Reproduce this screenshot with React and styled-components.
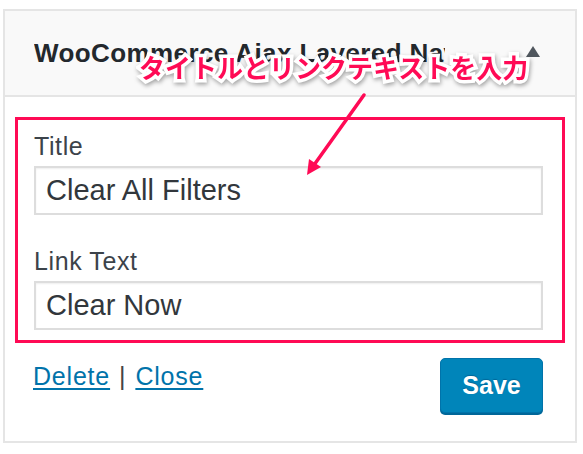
import React from "react";
import styled, { createGlobalStyle } from "styled-components";

const GlobalStyle = createGlobalStyle`
  html, body {
    margin: 0;
    padding: 0;
    background: #fff;
  }
  body {
    font-family: "Liberation Sans", Arial, sans-serif;
  }
`;

const Page = styled.div`
  position: relative;
  width: 583px;
  height: 454px;
  box-sizing: border-box;
  padding: 9px 6px 0 3px;
`;

const Widget = styled.div`
  border: 2px solid #e5e5e5;
  background: #fff;
`;

const WidgetHeader = styled.div`
  height: 84px;
  display: flex;
  align-items: center;
  justify-content: space-between;
  padding: 0 35px 0 29px;
  background: #f9f9f9;
  border-bottom: 2px solid #e5e5e5;
`;

const WidgetTitle = styled.h3`
  margin: 0;
  width: 411px;
  overflow: hidden;
  white-space: nowrap;
  font-size: 26px;
  font-weight: 700;
  letter-spacing: 0.4px;
  color: #23282d;
`;

const Toggle = styled.span`
  width: 0;
  height: 0;
  margin-bottom: 4px;
  border-left: 7px solid transparent;
  border-right: 7px solid transparent;
  border-bottom: 11px solid #50575e;
`;

const WidgetBody = styled.div`
  padding: 20px 10px 0 10px;
`;

const Highlight = styled.div`
  border: 3px solid #ff0a55;
  padding: 12px 19px 10px 16px;
`;

const Field = styled.div`
  & + & {
    margin-top: 32px;
  }
`;

const Label = styled.label`
  display: block;
  font-size: 25px;
  line-height: 28px;
  letter-spacing: 0.6px;
  color: #3c434a;
  margin-bottom: 6px;
`;

const Input = styled.input`
  display: block;
  width: 100%;
  height: 49px;
  box-sizing: border-box;
  border: 2px solid #ddd;
  box-shadow: inset 0 1px 2px rgba(0, 0, 0, 0.07);
  padding: 0 10px;
  font-family: "Liberation Sans", Arial, sans-serif;
  font-size: 29px;
  color: #32373c;
  background: #fff;
  outline: none;
`;

const Actions = styled.div`
  display: flex;
  justify-content: space-between;
  align-items: flex-start;
  padding: 15px 22px 28px 18px;
`;

const Links = styled.div`
  font-size: 25px;
  line-height: 28px;
  letter-spacing: 0.8px;
  color: #444;
  padding-top: 4px;
`;

const Link = styled.a`
  color: #0073aa;
  text-decoration: underline;
  text-underline-offset: 3px;
  cursor: pointer;
`;

const Sep = styled.span`
  margin: 0 9px;
`;

const SaveButton = styled.button`
  width: 103px;
  height: 55px;
  box-sizing: border-box;
  border: 1px solid #0073aa;
  border-radius: 5px;
  background: #0085ba;
  box-shadow: 0 2px 0 #006799;
  color: #fff;
  font-family: "Liberation Sans", Arial, sans-serif;
  font-size: 25px;
  font-weight: 700;
  text-shadow: 0 -1px 1px #006799;
  cursor: pointer;
`;

const Callout = styled.div`
  position: absolute;
  top: 52px;
  left: 139px;
  font-family: "Noto Sans CJK JP", sans-serif;
  font-size: 26px;
  font-weight: 700;
  line-height: 30px;
  color: #ff0a55;
  -webkit-text-stroke: 7px #fff;
  paint-order: stroke fill;
  filter: drop-shadow(1px 2px 2px rgba(0, 0, 0, 0.35));
  white-space: nowrap;
`;

const ArrowLayer = styled.svg`
  position: absolute;
  top: 0;
  left: 0;
  pointer-events: none;
`;

export default function App() {
  return (
    <>
      <GlobalStyle />
      <Page>
        <Widget>
          <WidgetHeader>
            <WidgetTitle>WooCommerce Ajax Layered Nav Filters</WidgetTitle>
            <Toggle />
          </WidgetHeader>
          <WidgetBody>
            <Highlight>
              <Field>
                <Label>Title</Label>
                <Input defaultValue="Clear All Filters" />
              </Field>
              <Field>
                <Label>Link Text</Label>
                <Input defaultValue="Clear Now" />
              </Field>
            </Highlight>
            <Actions>
              <Links>
                <Link>Delete</Link>
                <Sep>|</Sep>
                <Link>Close</Link>
              </Links>
              <SaveButton>Save</SaveButton>
            </Actions>
          </WidgetBody>
        </Widget>
        <Callout>タイトルとリンクテキストを入力</Callout>
        <ArrowLayer width="583" height="454" viewBox="0 0 583 454">
          <line x1="364" y1="95" x2="314" y2="165" stroke="#ff0a55" strokeWidth="3.5" strokeLinecap="round" />
          <polygon points="307,175 309,159 321,167" fill="#ff0a55" />
        </ArrowLayer>
      </Page>
    </>
  );
}
